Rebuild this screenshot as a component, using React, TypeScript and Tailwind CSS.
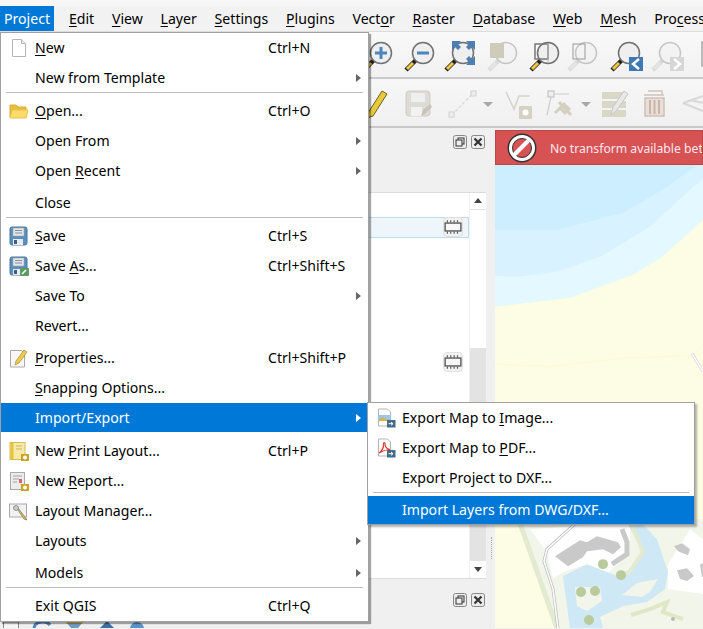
import type { ReactNode } from 'react';

type Row = {
  label?: string;
  key?: string;
  arrow?: boolean;
  icon?: ReactNode;
  active?: boolean;
  cls?: string;
  sep?: boolean;
  blank?: boolean;
};

function Label({ text }: { text: string }) {
  const i = text.indexOf('&');
  if (i < 0) return <span>{text}</span>;
  return (
    <span>
      {text.slice(0, i)}
      <span className="underline underline-offset-2">{text[i + 1]}</span>
      {text.slice(i + 2)}
    </span>
  );
}

function Ico({ children }: { children: ReactNode }) {
  return (
    <svg viewBox="0 0 20 20" className="ml-[8px] h-5 w-5">
      {children}
    </svg>
  );
}

const floppy = (
  <>
    <rect x="1" y="1" width="17" height="18" rx="2" fill="#5b8fbd" stroke="#49779f" />
    <rect x="4" y="2" width="11" height="8" fill="#e3e6ea" stroke="#9aa" strokeWidth="0.6" />
    <path d="M6 4.5h7M6 7h7" stroke="#8a8f96" />
    <rect x="4" y="13" width="10" height="6" fill="#e8ecf0" />
    <rect x="5" y="14" width="3" height="4" fill="#3f5f7d" />
  </>
);

const NewIcon = (
  <Ico>
    <path d="M3.5 1.5h9l4 4v13h-13z" fill="#fff" stroke="#b5b5b5" />
    <path d="M12.5 1.5v4h4" fill="#eee" stroke="#b5b5b5" />
  </Ico>
);
const OpenIcon = (
  <Ico>
    <path d="M1 16V4h6l2 2h8v10z" fill="#e8bf3d" stroke="#d8ad30" />
    <path d="M1 17l2-8h16l-2 8z" fill="#fbdc6a" stroke="#e8c24a" />
  </Ico>
);
const SaveIcon = <Ico>{floppy}</Ico>;
const SaveAsIcon = (
  <Ico>
    {floppy}
    <rect x="11" y="12" width="9" height="8" rx="1" fill="#5b9a62" />
    <path d="M13 18l4-4" stroke="#fff" strokeWidth="1.6" />
  </Ico>
);
const PropsIcon = (
  <Ico>
    <path d="M1.5 2.5h11l3 3v13.5h-14z" fill="#f7f7f7" stroke="#aaa" />
    <path d="M6 17l1-4 8-11 3 2-8 11z" fill="#eccb4e" stroke="#a98d2c" strokeWidth="0.7" />
  </Ico>
);
const gear = (
  <>
    <rect x="12" y="13" width="8" height="7" fill="#c9a227" />
    <circle cx="16" cy="16.5" r="2" fill="#fff" />
  </>
);
const PrintIcon = (
  <Ico>
    <rect x="1" y="1.5" width="15" height="17" fill="#f7e9a8" stroke="#d9bb50" />
    <path d="M1.5 2h3v16h-3z" fill="#e5c23f" />
    <path d="M7 5h6M7 8h6" stroke="#c9b46a" />
    {gear}
  </Ico>
);
const ReportIcon = (
  <Ico>
    <rect x="1.5" y="1.5" width="14" height="17" fill="#ececec" stroke="#aaa" />
    <path d="M4 5h9M4 8h6M4 11h4" stroke="#9ba4ad" />
    <rect x="10" y="8" width="3" height="4" fill="#d66" />
    {gear}
  </Ico>
);
const ManagerIcon = (
  <Ico>
    <rect x="0.5" y="3" width="17" height="13" fill="#f0f2f5" stroke="#a8a8a8" />
    <path d="M6 6l3 1 7 9 2 3-3-1-6-9z" fill="#d9c26e" stroke="#7d6f3c" strokeWidth="0.7" />
    <circle cx="7" cy="7" r="2.5" fill="#c9ccd0" stroke="#777" strokeWidth="0.7" />
  </Ico>
);
const exportBadge = (
  <>
    <rect x="11" y="12" width="8.5" height="7.5" fill="#456b8a" />
    <path d="M12.5 15.7h4M15 14l2 1.7-2 1.7" stroke="#fff" fill="none" />
  </>
);
const ImageIcon = (
  <Ico>
    <path d="M2.5 1h9l3 3v14h-12z" fill="#fff" stroke="#b5b5b5" />
    <rect x="2" y="7" width="13" height="6" fill="#9cc5e6" />
    <path d="M2 13l4-4 4 2 5 2z" fill="#d8b34a" />
    {exportBadge}
  </Ico>
);
const PdfIcon = (
  <Ico>
    <path d="M2.5 1h9l3 3v14h-12z" fill="#fff" stroke="#b5b5b5" />
    <path d="M3 15c3-2 5-6 4.500-9 0-2 1.500-2 1.500 0 0 3 2 5 5 5.500-3 0-7 1-11 3.500z" fill="none" stroke="#e2382b" strokeWidth="1.200" />
    {exportBadge}
  </Ico>
);

const projectRows: Row[] = [
  { label: '&New', key: 'Ctrl+N', icon: NewIcon },
  { label: 'New from Template', arrow: true },
  { sep: true },
  { label: '&Open...', key: 'Ctrl+O', icon: OpenIcon },
  { label: 'Open From', arrow: true },
  { label: 'Open &Recent', arrow: true },
  { label: 'Close', cls: 'h-[32px] pt-[2px]' },
  { sep: true },
  { label: '&Save', key: 'Ctrl+S', icon: SaveIcon },
  { label: 'Save &As...', key: 'Ctrl+Shift+S', icon: SaveAsIcon },
  { label: 'Save To', arrow: true },
  { label: 'Revert...', cls: 'h-[32px] pb-[2px]' },
  { label: '&Properties...', key: 'Ctrl+Shift+P', icon: PropsIcon },
  { label: '&Snapping Options...' },
  { label: 'Import/Export', arrow: true, active: true, cls: 'h-[29px]' },
  { blank: true },
  { label: 'New &Print Layout...', key: 'Ctrl+P', icon: PrintIcon },
  { label: 'New &Report...', icon: ReportIcon },
  { label: 'Layout Manager...', icon: ManagerIcon },
  { label: 'Layouts', arrow: true },
  { label: 'Models', arrow: true, cls: 'h-[32px] pt-[2px]' },
  { sep: true },
  { label: 'Exit QGIS', key: 'Ctrl+Q' },
];

const exportRows: Row[] = [
  { label: 'Export Map to &Image...', icon: ImageIcon },
  { label: 'Export Map to &PDF...', icon: PdfIcon },
  { label: 'Export Project to DXF...' },
  { sep: true },
  { label: 'Import Layers from DWG/DXF...', active: true, cls: 'h-[28px]' },
];

function MenuRows({ rows }: { rows: Row[] }) {
  return (
    <>
      {rows.map((r, i) => {
        if (r.sep) return <div key={i} className="mx-[5px] -mt-px h-[4px] border-t border-[#bdbdbd]" />;
        if (r.blank) return <div key={i} className="h-[4px]" />;
        return (
          <div
            key={i}
            className={`flex items-center ${r.cls ?? 'h-[30px]'} ${r.active ? 'bg-[#0078d7] text-white' : 'text-black'}`}
          >
            <div className="w-[34px] shrink-0">{r.icon}</div>
            <div className="w-[233px] shrink-0 whitespace-nowrap">
              <Label text={r.label ?? ''} />
            </div>
            <div className="flex-1 whitespace-nowrap">{r.key}</div>
            {r.arrow && (
              <div className={`mr-[7px] h-0 w-0 border-y-[4px] border-l-[5px] border-y-transparent ${r.active ? 'border-l-white' : 'border-l-[#666]'}`} />
            )}
          </div>
        );
      })}
    </>
  );
}

const menuBar = ['&Edit', '&View', '&Layer', '&Settings', '&Plugins', 'Vect&or', '&Raster', '&Database', '&Web', '&Mesh', 'Pro&cessing'];

function MenuBar() {
  return (
    <div className="flex h-[25px] items-center bg-[#f2f2f2]">
      <div className="flex h-[25px] w-[54px] shrink-0 items-center justify-center bg-[#0078d7] text-white">Project</div>
      <div className="flex pl-[6px]">
        {menuBar.map((m) => (
          <div key={m} className="shrink-0 whitespace-nowrap px-[8.9px]">
            <Label text={m} />
          </div>
        ))}
      </div>
    </div>
  );
}

function Lens({ cls, off, children }: { cls: string; off?: boolean; children?: ReactNode }) {
  return (
    <svg viewBox="0 0 36 36" className={`h-9 w-9 shrink-0 ${cls}`}>
      <g opacity={off ? 0.35 : 1}>
        <path d="M15 21L5 31" stroke={off ? '#aaa' : '#222'} strokeWidth="4.500" />
        <path d="M12 24L6 30" stroke={off ? '#ccc' : '#f0c63f'} strokeWidth="3" />
        <circle cx="22" cy="14" r="10.500" fill="#efefef" stroke="#707070" strokeWidth="1.500" />
      </g>
      {children}
    </svg>
  );
}

function Toolbar1() {
  return (
    <div className="flex h-[47px] overflow-hidden border-b-2 border-[#c9c9c9] bg-gradient-to-b from-[#f9f9f9] to-[#f1f1f1] pt-[7px]">
      <Lens cls="ml-[359px]">
        <path d="M16 14h12M22 8v12" stroke="#4d86bd" strokeWidth="3" />
      </Lens>
      <Lens cls="ml-[6px]">
        <path d="M16 14h12" stroke="#4d86bd" strokeWidth="3" />
      </Lens>
      <Lens cls="ml-[4px]">
        <path d="M11 2h9l-3 3 3 3-3 3-3-3-3 3zM34 2h-9l3 3-3 3 3 3 3-3 3 3zM34 26h-9l3-3-3-3 3-3 3 3 3-3z" fill="#4d7fb3" />
      </Lens>
      <Lens cls="ml-[7px]" off>
        <rect x="6" y="4" width="14" height="15" fill="#cfcbbb" />
      </Lens>
      <Lens cls="ml-[6px]">
        <rect x="9" y="5" width="13" height="15" fill="none" stroke="#777" strokeWidth="1.500" />
        <path d="M22 4v20" stroke="#bbb" />
      </Lens>
      <Lens cls="ml-[2px]" off>
        <rect x="9" y="5" width="12" height="15" fill="none" stroke="#999" />
      </Lens>
      <Lens cls="ml-[7px]">
        <rect x="22" y="18" width="14" height="14" fill="#3f79b5" />
        <path d="M32 20l-6 5 6 5" fill="none" stroke="#fff" strokeWidth="2.500" />
      </Lens>
      <Lens cls="ml-[5px]" off>
        <rect x="22" y="18" width="14" height="14" fill="#d6d6d6" />
        <path d="M26 20l6 5-6 5" fill="none" stroke="#fff" strokeWidth="2.500" />
      </Lens>
      <svg viewBox="0 0 36 36" className="h-9 w-9 shrink-0">
        <path d="M18 3h14v24h-14z" fill="#e5e5e5" stroke="#aaa" strokeWidth="1.500" />
      </svg>
    </div>
  );
}

function Tool({ cls, children }: { cls: string; children: ReactNode }) {
  return (
    <svg viewBox="0 0 30 30" className={`h-[30px] w-[30px] shrink-0 ${cls}`}>
      {children}
    </svg>
  );
}

function DropArrow({ cls }: { cls: string }) {
  return <div className={`mt-[13px] h-0 w-0 shrink-0 border-x-[5px] border-t-[5px] border-x-transparent border-t-[#a8a8a8] ${cls}`} />;
}

function Toolbar2() {
  return (
    <div className="flex h-[49px] overflow-hidden border-b-2 border-[#c9c9c9] bg-gradient-to-b from-[#f7f7f7] to-[#f0f0f0] pt-[10px]">
      <Tool cls="ml-[360px]">
        <path d="M8 24L22 2l5 3L13 27l-6 2z" fill="#e7c93c" stroke="#6d5f1e" />
      </Tool>
      <Tool cls="ml-[14px]">
        <rect x="2" y="2" width="24" height="25" rx="3" fill="#dddbd5" stroke="#cfcdc7" />
        <rect x="7" y="4" width="14" height="9" fill="#efefef" />
        <rect x="7" y="18" width="11" height="9" fill="#f2f2f2" />
        <path d="M17 27l2-6 7-6 2 3-7 7z" fill="#c8c4bc" />
      </Tool>
      <Tool cls="ml-[13px]">
        <path d="M5 26L26 4" stroke="#d9d9d9" strokeDasharray="3 2" strokeWidth="1.500" />
        <rect x="2" y="23" width="5" height="5" fill="#eee" stroke="#d2d2d2" />
        <rect x="24" y="2" width="5" height="5" fill="#eee" stroke="#d2d2d2" />
      </Tool>
      <DropArrow cls="ml-[6px]" />
      <Tool cls="ml-[10px]">
        <path d="M3 3l8 17 5-13h11" fill="none" stroke="#d5d3c8" strokeWidth="1.500" />
        <rect x="16" y="17" width="13" height="13" rx="1" fill="#d5d2c4" />
        <circle cx="22.500" cy="23.500" r="3" fill="#fff" />
      </Tool>
      <Tool cls="ml-[12px]">
        <rect x="3" y="2" width="6" height="6" fill="#eee" stroke="#bbb" />
        <path d="M10 5h14M6 8L2 26" stroke="#ccc" strokeWidth="1.200" />
        <path d="M10 24l9-9 5 5-4 4-5-5M14 13l12 13" fill="none" stroke="#d4cfbf" strokeWidth="3" />
      </Tool>
      <DropArrow cls="ml-[6px]" />
      <Tool cls="ml-[9px]">
        <rect x="2" y="3" width="24" height="7" fill="#d9d8c6" />
        <rect x="2" y="12" width="24" height="7" fill="#d9d8c6" />
        <rect x="2" y="21" width="24" height="7" fill="#d9d8c6" />
        <path d="M11 26l2-8L24 2l4 3-11 16z" fill="#e8e8e8" stroke="#c8c8c8" />
      </Tool>
      <Tool cls="ml-[10px]">
        <path d="M4 6h20M8 2h14v4" fill="none" stroke="#d6cfca" strokeWidth="2" />
        <path d="M5 9h19v18H5z" fill="#e9dfd9" stroke="#cfc0b8" strokeWidth="1.500" />
        <path d="M10 11v14M14.500 11v14M19 11v14" stroke="#cbb3aa" strokeWidth="2" />
      </Tool>
      <Tool cls="ml-[12px]">
        <path d="M1 14l20-7M1 14l20 8M8 11l14 3" fill="none" stroke="#d8d8d8" strokeWidth="2" />
      </Tool>
    </div>
  );
}

function DockButtons({ cls }: { cls: string }) {
  return (
    <div className={`flex justify-end gap-[4px] pr-[10px] ${cls}`}>
      <svg viewBox="0 0 14 14" className="h-[14px] w-[14px]">
        <rect x="0.500" y="0.500" width="13" height="13" rx="2" fill="#ececec" stroke="#888" />
        <rect x="5" y="3" width="6" height="6" fill="none" stroke="#333" />
        <rect x="3" y="5" width="6" height="6" fill="#eee" stroke="#333" />
      </svg>
      <svg viewBox="0 0 14 14" className="h-[14px] w-[14px]">
        <rect x="0.500" y="0.500" width="13" height="13" rx="2" fill="#ececec" stroke="#888" />
        <path d="M3.500 3.500l7 7M10.500 3.500l-7 7" stroke="#333" strokeWidth="2.200" />
      </svg>
    </div>
  );
}

function Chip() {
  return (
    <div className="flex h-[20px] w-[20px] items-center justify-center rounded-sm border border-[#e0e0e0] bg-[#f1f1f1]">
      <svg viewBox="0 0 16 12" className="h-[14px] w-[18px]">
        <rect x="1" y="2.500" width="14" height="7" fill="#f8f8f8" stroke="#555" strokeWidth="1.200" />
        <path d="M3 0v2M6 0v2M9 0v2M12 0v2M3 10v2M6 10v2M9 10v2M12 10v2" stroke="#555" />
      </svg>
    </div>
  );
}

function LeftPanel() {
  return (
    <div className="flex h-full w-[495px] shrink-0 flex-col bg-[#f0f0f0]">
      <DockButtons cls="h-[64px] pt-[7px]" />
      <div className="mr-[9px] flex h-[388px] border-y border-[#dcdcdc] bg-white">
        <div className="flex-1">
          <div className="mt-[24px] flex h-[21px] items-center justify-end border border-[#bcdcf4] bg-[#eef6fc] pr-[5px]">
            <Chip />
          </div>
          <div className="mt-[114px] flex justify-end pr-[6px]">
            <Chip />
          </div>
        </div>
        <div className="flex w-[17px] flex-col border-l border-[#f0f0f0]">
          <div className="flex h-[17px] items-center justify-center border-b border-[#e2e2e2]">
            <div className="h-0 w-0 border-x-[4px] border-b-[5px] border-x-transparent border-b-[#444]" />
          </div>
          <div className="h-[138px]" />
          <div className="flex-1 bg-[#e3e3e3]" />
          <div className="flex h-[17px] items-center justify-center">
            <div className="h-0 w-0 border-x-[4px] border-t-[5px] border-x-transparent border-t-[#444]" />
          </div>
        </div>
      </div>
      <DockButtons cls="h-[40px] pt-[14px]" />
      <div className="flex h-[9px] overflow-hidden pl-[3px]">
        <svg viewBox="0 0 145 9" className="h-[9px] w-[145px]">
          <rect x="0.500" y="3" width="15" height="12" fill="#f6f6f6" stroke="#888" />
          <path d="M31 9c1-7 12-8 16-3" fill="none" stroke="#4d86bd" strokeWidth="3" />
          <path d="M63 3h17l-5 6h-7z" fill="#6f9bc6" />
          <path d="M63 3h17" stroke="#eec03b" strokeWidth="2.500" />
          <path d="M104 2l7 7H97z" fill="#3f6f9e" />
          <circle cx="134" cy="10" r="7" fill="#5b93c7" />
        </svg>
      </div>
    </div>
  );
}

function MapView() {
  return (
    <div className="relative flex min-w-0 flex-1 flex-col pt-[2px]">
      <div className="flex h-[35px] items-center overflow-hidden whitespace-nowrap border border-[#b9484a] bg-[#d65253] text-[12.2px] text-[#fde6ee]">
        <svg viewBox="0 0 30 30" className="ml-[11px] mr-[13px] h-[30px] w-[30px] shrink-0">
          <circle cx="15" cy="15" r="14.500" fill="#333" />
          <circle cx="15" cy="15" r="13" fill="#fff" />
          <circle cx="15" cy="15" r="9.500" fill="#d65253" stroke="#333" strokeWidth="1" />
          <path d="M7 22L22 7" stroke="#fff" strokeWidth="4" />
        </svg>
        <span className="pt-[4px]">No transform available between EPSG:4326 and EPSG:28992</span>
      </div>
      <svg viewBox="495 165 208 464" preserveAspectRatio="none" className="block w-full flex-1">
        <rect x="495" y="165" width="208" height="464" fill="#fdfce4" />
        <path d="M495 165H703V220L662 257 633 275 570 298 495 307Z" fill="#e3f8ff" />
        <path d="M495 165H703V178L650 227 600 257 557 272 517 277 495 276Z" fill="#d8f2ff" />
        <path d="M495 165H697L667 187 623 213 557 230 495 230Z" fill="#cdeeff" />
        <path d="M495 365L550 367 620 359 692 356 703 345" fill="none" stroke="#fbfbdb" strokeWidth="1.500" />
        <path d="M692 354L703 372" stroke="#d5d5d5" strokeWidth="3" />
        <path d="M692 354L703 372" stroke="#fff" strokeWidth="1.500" />
        <path d="M517 520H703V629H557Z" fill="#f2f5e9" />
        <path d="M520 524L557 629" stroke="#e2ebcf" strokeWidth="5" />
        <path d="M530 530L573 527 630 525 630 553 607 575 587 565 563 573 553 580 547 553Z" fill="#fff" />
        <path d="M668 565L690 530 703 540V595L668 590Z" fill="#fff" />
        <path d="M578 522L547 550 544 562 553 590 558 629" fill="none" stroke="#bdbdbd" strokeWidth="3" />
        <path d="M578 522L547 550 544 562 553 590 558 629" fill="none" stroke="#fff" strokeWidth="1.500" />
        <path d="M628 525L643 553 630 573 620 578 587 565 563 577 567 607 570 629H603L600 618 623 607 647 603 665 590 668 573 657 540 640 522Z" fill="#cfe8f6" />
        <path d="M575 588L600 588 602 602 587 612 577 607Z" fill="#f2f5e9" />
        <path d="M622 596L637 584 658 580 650 593 642 598Z" fill="#f2f5e9" />
        <path d="M632 525L643 553 630 572 621 577" fill="none" stroke="#e2ebcf" strokeWidth="4" />
        <path d="M555 557L580 541 587 543 597 537 618 543 621 548 613 555 603 550 587 552 583 558 568 567Z" fill="#c9c9c9" />
        <path d="M622 530L627 543 627 555 612 565" fill="none" stroke="#c9c9c9" strokeWidth="5" />
        <path d="M674 547L682 544 690 550 688 556 678 552Z" fill="#c9c9c9" />
        <path d="M677 571L687 569 694 577 687 582 680 580Z" fill="#c9c9c9" />
        <path d="M700 565L703 564V578L702 578Z" fill="#c9c9c9" />
        <circle cx="603" cy="565" r="5" fill="#b9ca9c" />
        <circle cx="621" cy="576" r="5" fill="#b9ca9c" />
        <circle cx="581" cy="593" r="5" fill="#b9ca9c" />
        <circle cx="595" cy="592" r="5" fill="#b9ca9c" />
        <circle cx="589" cy="621" r="5" fill="#b9ca9c" />
        <path d="M631 616L650 610 667 603 663 613 683 620" fill="none" stroke="#dfe8c4" strokeWidth="4" />
        <circle cx="673" cy="620" r="2" fill="#b8bdb8" />
      </svg>
    </div>
  );
}

export default function App() {
  return (
    <div className="relative h-[629px] w-[703px] overflow-hidden bg-[#f0f0f0] text-[14.1px] text-black [font-family:'Noto_Sans',sans-serif]">
      <div className="h-[6px] bg-[#f7f7f7]" />
      <MenuBar />
      <div className="h-px bg-[#dcdcdc]" />
      <Toolbar1 />
      <Toolbar2 />
      <div className="flex h-[500px]">
        <LeftPanel />
        <MapView />
      </div>

      <div className="absolute left-[491px] top-[537px] h-[22px] w-px border-l border-dotted border-[#aaa]" />

      <div className="absolute left-0 top-[32px] w-[369px] border border-[#a0a0a0] bg-white shadow-[2px_2px_1px_rgba(0,0,0,0.35)]">
        <MenuRows rows={projectRows} />
      </div>

      <div className="absolute left-[367px] top-[402px] w-[328px] border border-[#a0a0a0] bg-white shadow-[2px_2px_2px_rgba(0,0,0,0.3)]">
        <MenuRows rows={exportRows} />
      </div>
    </div>
  );
}
